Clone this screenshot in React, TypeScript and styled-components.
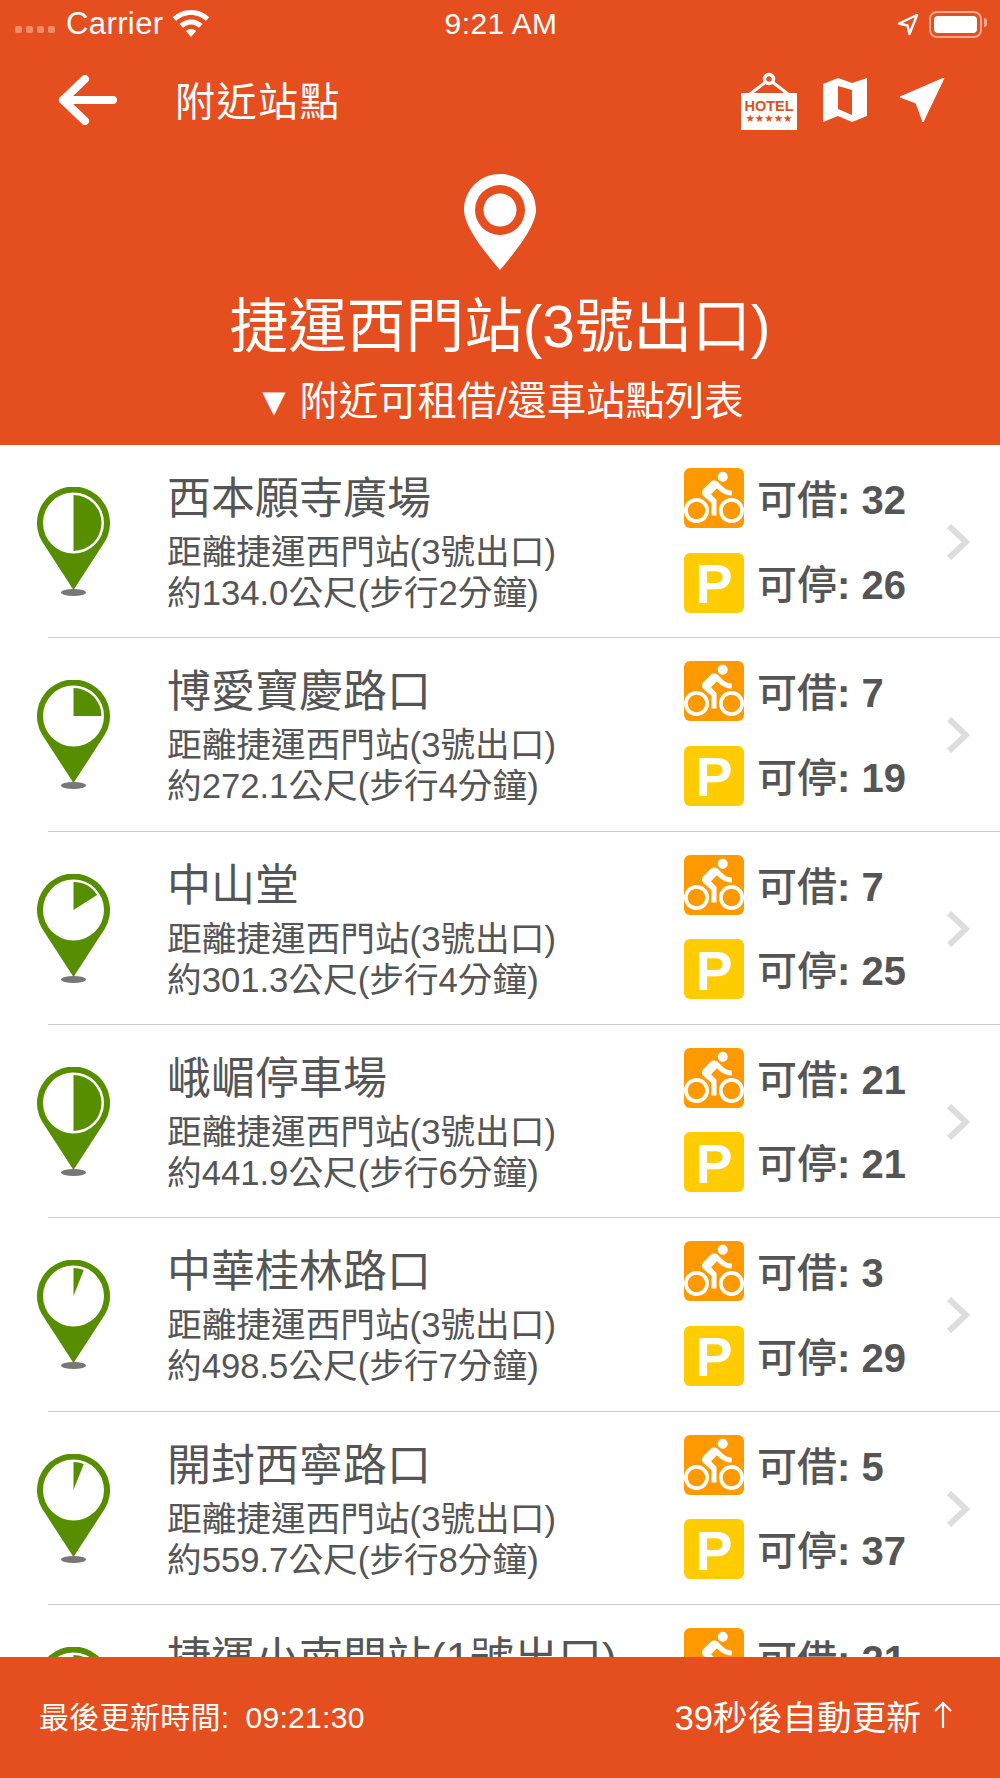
import * as React from "react";
import styled, { createGlobalStyle } from "styled-components";
import { MdDirectionsBike } from "react-icons/md";

const ORANGE = "#e54f1f";
const GREEN = "#568e00";
const FONT = `"Liberation Sans", "Noto Sans CJK TC", sans-serif`;

const GlobalStyle = createGlobalStyle`
  html, body {
    margin: 0;
    padding: 0;
    background: #ffffff;
  }
  * {
    box-sizing: border-box;
  }
`;

const Page = styled.div`
  width: 1000px;
  height: 1778px;
  display: flex;
  flex-direction: column;
  overflow: hidden;
  font-family: ${FONT};
  background: #ffffff;
`;

const Header = styled.header`
  height: 445px;
  flex: none;
  background: ${ORANGE};
  color: #ffffff;
  display: flex;
  flex-direction: column;
  align-items: center;
`;

const StatusBar = styled.div`
  width: 100%;
  height: 48px;
  padding: 0 13px 0 15px;
  display: grid;
  grid-template-columns: 1fr auto 1fr;
  align-items: center;
`;

const StatusLeft = styled.div`
  display: flex;
  align-items: center;
`;

const StatusRight = styled.div`
  display: flex;
  align-items: center;
  justify-content: flex-end;
  gap: 10px;
  padding-right: 5px;
`;

const SignalDots = styled.div`
  display: flex;
  gap: 4px;
  margin: 10px 11px 0 0;
`;

const SignalDot = styled.span`
  width: 7px;
  height: 7px;
  border-radius: 2px;
  background: rgba(255, 255, 255, 0.35);
`;

const Carrier = styled.span`
  font-size: 31px;
  line-height: 48px;
  margin-right: 6px;
  letter-spacing: 0.4px;
`;

const Clock = styled.span`
  font-size: 30px;
  line-height: 48px;
  letter-spacing: 0.4px;
`;

const Battery = styled.div`
  width: 53px;
  height: 27px;
  padding: 3px;
  border: 2px solid rgba(255, 255, 255, 0.5);
  border-radius: 8px;
  position: relative;

  &::before {
    content: "";
    display: block;
    height: 100%;
    border-radius: 4px;
    background: #ffffff;
  }

  &::after {
    content: "";
    position: absolute;
    top: 5px;
    right: -7px;
    width: 3px;
    height: 9px;
    border-radius: 0 3px 3px 0;
    background: rgba(255, 255, 255, 0.5);
  }
`;

const NavBar = styled.nav`
  width: 100%;
  height: 104px;
  padding: 0 55px 0 58px;
  display: flex;
  align-items: center;
`;

const NavTitle = styled.h1`
  margin: 4px 0 0 57px;
  flex: 1;
  font-size: 40px;
  font-weight: 400;
  line-height: 48px;
  letter-spacing: 1.5px;
`;

const NavIcons = styled.div`
  display: flex;
  align-items: center;
  gap: 26px;
`;

const StationPin = styled.svg`
  display: block;
  margin-top: 22px;
`;

const StationTitle = styled.h2`
  margin: 21px 0 0;
  font-size: 58.67px;
  font-weight: 400;
  line-height: 72px;
  white-space: nowrap;
`;

const StationSub = styled.div`
  margin: 11px 0 0 -2px;
  font-size: 39.4px;
  line-height: 54px;
  white-space: nowrap;
`;

const SubMark = styled.span`
  margin-right: 6px;
`;

const List = styled.main`
  flex: 1;
  min-height: 0;
  overflow: hidden;
`;

const Row = styled.div`
  position: relative;
  height: 193.33px;
  padding: 42px 0 0 37px;
  display: flex;
  align-items: flex-start;

  &::after {
    content: "";
    position: absolute;
    left: 48px;
    right: 0;
    bottom: 0;
    height: 1px;
    background: #cccccc;
  }
`;

const PinBox = styled.div`
  width: 130px;
  flex: none;
`;

const Info = styled.div`
  width: 517px;
  flex: none;
  margin-top: -16px;
  color: #555555;
`;

const Name = styled.div`
  font-size: 44px;
  line-height: 56px;
  white-space: nowrap;
`;

const Desc = styled.div`
  font-size: 34.67px;
  line-height: 41px;
  white-space: nowrap;
  margin-top: 5px;

  & + & {
    margin-top: 0;
  }
`;

const Stats = styled.div`
  width: 263px;
  flex: none;
  margin-top: -19px;
  display: flex;
  flex-direction: column;
  gap: 24.5px;
`;

const Stat = styled.div`
  display: flex;
  align-items: center;
  gap: 13px;
  color: #555555;
  font-size: 40px;
  font-weight: 700;
  white-space: pre;
`;

const StatText = styled.span`
  margin-top: -2px;
`;

const StatLabel = styled.span`
  font-weight: 500;
`;

const Badge = styled.div<{ $color: string }>`
  width: 60px;
  height: 60px;
  border-radius: 6px;
  background: ${(p) => p.$color};
  color: #ffffff;
  display: flex;
  align-items: center;
  justify-content: center;
  padding-top: 3px;
  font-size: 56px;
  font-weight: 700;
  line-height: 60px;
  flex: none;
`;

const BikeBadge = styled(Badge)`
  padding-top: 0;
`;

const Chevron = styled.svg`
  position: absolute;
  top: 79px;
  left: 946px;
`;

const Footer = styled.footer`
  height: 121px;
  flex: none;
  background: ${ORANGE};
  color: #ffffff;
  padding: 0 47px 5px 39px;
  display: flex;
  align-items: center;
  justify-content: space-between;
`;

const Updated = styled.span`
  font-size: 30px;
  letter-spacing: 0.3px;
`;

const UpdatedTime = styled.span`
  margin-left: 16px;
`;

const Countdown = styled.span`
  font-size: 34.67px;
  display: flex;
  align-items: center;
  gap: 12px;
`;

const UpArrow = styled.svg`
  display: block;
`;

function sectorPath(cx: number, cy: number, r: number, fraction: number) {
  const a = fraction * Math.PI * 2;
  const x = cx + r * Math.sin(a);
  const y = cy - r * Math.cos(a);
  const large = fraction > 0.5 ? 1 : 0;
  return `M${cx} ${cy}L${cx} ${cy - r}A${r} ${r} 0 ${large} 1 ${x.toFixed(2)} ${y.toFixed(2)}Z`;
}

function Pin({ fraction }: { fraction: number }) {
  return (
    <svg width="74" height="112" viewBox="0 0 74 112" style={{ display: "block" }}>
      <ellipse cx="36.5" cy="105.5" rx="12.5" ry="3.5" fill="#777777" />
      <path d="M36.5 103L4.9 54.3A36.5 36.5 0 1 1 68.1 54.3Z" fill={GREEN} />
      <circle cx="36.5" cy="36" r="30.5" fill="#ffffff" />
      <path d={sectorPath(36.5, 36, 28, fraction)} fill={GREEN} />
    </svg>
  );
}

function HotelIcon() {
  return (
    <svg width="56" height="60" viewBox="0 0 56 60">
      <circle cx="28" cy="9" r="4.500" fill="none" stroke="#fff" strokeWidth="3.500" />
      <path d="M24 12.500L9 24M32 12.500L47 24" stroke="#fff" strokeWidth="3" />
      <rect x="0" y="23" width="56" height="37" fill="#fff" />
      <text
        x="28"
        y="40.500"
        textAnchor="middle"
        fontFamily={FONT}
        fontWeight="700"
        fontSize="14.500"
        fill={ORANGE}
      >
        HOTEL
      </text>
      <text
        x="28"
        y="52"
        textAnchor="middle"
        fontFamily='"DejaVu Sans", sans-serif'
        fontSize="10.500"
        fill={ORANGE}
      >
        ★★★★★
      </text>
    </svg>
  );
}

type Station = {
  name: string;
  dist?: string;
  bikes: number;
  docks?: number;
  fraction: number;
};

// the last row is cut by the footer, only its top line is seen
const stations: Station[] = [
  { name: "西本願寺廣場", dist: "約134.0公尺(步行2分鐘)", bikes: 32, docks: 26, fraction: 0.5 },
  { name: "博愛寶慶路口", dist: "約272.1公尺(步行4分鐘)", bikes: 7, docks: 19, fraction: 0.25 },
  { name: "中山堂", dist: "約301.3公尺(步行4分鐘)", bikes: 7, docks: 25, fraction: 0.16 },
  { name: "峨嵋停車場", dist: "約441.9公尺(步行6分鐘)", bikes: 21, docks: 21, fraction: 0.5 },
  { name: "中華桂林路口", dist: "約498.5公尺(步行7分鐘)", bikes: 3, docks: 29, fraction: 0.06 },
  { name: "開封西寧路口", dist: "約559.7公尺(步行8分鐘)", bikes: 5, docks: 37, fraction: 0.06 },
  { name: "捷運小南門站(1號出口)", bikes: 21, fraction: 0.4 },
];

export default function App() {
  return (
    <Page>
      <GlobalStyle />
      <Header>
        <StatusBar>
          <StatusLeft>
            <SignalDots>
              <SignalDot />
              <SignalDot />
              <SignalDot />
              <SignalDot />
            </SignalDots>
            <Carrier>Carrier</Carrier>
            <svg width="38" height="28" viewBox="0 0 38 28" style={{ marginLeft: 2 }}>
              <path
                d="M19 0C11.800 0 5.400 2.800 0.700 7.300L4.200 10.900C8 7.300 13.200 5 19 5S30 7.300 33.800 10.900L37.300 7.300C32.600 2.800 26.200 0 19 0Z"
                fill="#fff"
              />
              <path
                d="M19 9.500C14.500 9.500 10.500 11.300 7.500 14.100L11 17.700C13.100 15.800 15.900 14.500 19 14.500S24.900 15.800 27 17.700L30.500 14.100C27.500 11.300 23.500 9.500 19 9.500Z"
                fill="#fff"
              />
              <path d="M19 19C17 19 15.200 19.800 13.900 21L19 27L24.100 21C22.800 19.800 21 19 19 19Z" fill="#fff" />
            </svg>
          </StatusLeft>
          <Clock>9:21 AM</Clock>
          <StatusRight>
            <svg width="22" height="23" viewBox="0 0 22 23">
              <path
                d="M20 2L2 10.500L10.500 12.500L12.500 21Z"
                fill="none"
                stroke="#fff"
                strokeWidth="2.400"
                strokeLinejoin="round"
              />
            </svg>
            <Battery />
          </StatusRight>
        </StatusBar>
        <NavBar>
          <svg width="60" height="50" viewBox="0 0 60 50">
            <path
              d="M27 4L5 25L27 46M5 25H55"
              fill="none"
              stroke="#fff"
              strokeWidth="8"
              strokeLinecap="round"
              strokeLinejoin="round"
            />
          </svg>
          <NavTitle>附近站點</NavTitle>
          <NavIcons>
            <HotelIcon />
            <svg width="44" height="44" viewBox="0 0 44 44">
              <path
                d="M0 6L15 0L29 5L44 0V38L29 44L15 38L0 44ZM15 8V31L29 37V12Z"
                fill="#fff"
                fillRule="evenodd"
              />
            </svg>
            <svg width="46" height="44" viewBox="0 0 46 44" style={{ marginLeft: 6 }}>
              <path d="M45 0L1 19L17 25L24 44Z" fill="#fff" stroke="#fff" strokeWidth="1" strokeLinejoin="round" />
            </svg>
          </NavIcons>
        </NavBar>
        <StationPin width="72" height="96" viewBox="0 0 72 96">
          <path
            d="M36 0C16 0 0 16 0 36C0 54 26 84 36 96C46 84 72 54 72 36C72 16 56 0 36 0Z"
            fill="#fff"
          />
          <circle cx="36" cy="36" r="25" fill={ORANGE} />
          <circle cx="36" cy="36" r="16.500" fill="#fff" />
        </StationPin>
        <StationTitle>捷運西門站(3號出口)</StationTitle>
        <StationSub>
          <SubMark>▼</SubMark>附近可租借/還車站點列表
        </StationSub>
      </Header>
      <List>
        {stations.map((s) => (
          <Row key={s.name}>
            <PinBox>
              <Pin fraction={s.fraction} />
            </PinBox>
            <Info>
              <Name>{s.name}</Name>
              {s.dist && <Desc>距離捷運西門站(3號出口)</Desc>}
              {s.dist && <Desc>{s.dist}</Desc>}
            </Info>
            <Stats>
              <Stat>
                <BikeBadge $color="#ff9900">
                  <MdDirectionsBike size={60} color="#ffffff" />
                </BikeBadge>
                <StatText>
                  <StatLabel>可借</StatLabel>: {s.bikes}
                </StatText>
              </Stat>
              {s.docks !== undefined && (
                <Stat>
                  <Badge $color="#ffcc00">P</Badge>
                  <StatText>
                    <StatLabel>可停</StatLabel>: {s.docks}
                  </StatText>
                </Stat>
              )}
            </Stats>
            <Chevron width="24" height="36" viewBox="0 0 24 36">
              <path d="M3 2L20 18L3 34" fill="none" stroke="#dddddd" strokeWidth="6" />
            </Chevron>
          </Row>
        ))}
      </List>
      <Footer>
        <Updated>
          最後更新時間:<UpdatedTime>09:21:30</UpdatedTime>
        </Updated>
        <Countdown>
          39秒後自動更新
          <UpArrow width="20" height="28" viewBox="0 0 20 28">
            <path d="M10 27V2M2 10L10 2L18 10" fill="none" stroke="#fff" strokeWidth="2.200" />
          </UpArrow>
        </Countdown>
      </Footer>
    </Page>
  );
}
